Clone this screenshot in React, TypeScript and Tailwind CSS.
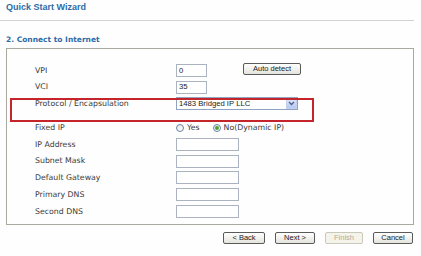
import React from 'react';

function TextBox({ value = '', w = 'w-[63px]' }: { value?: string; w?: string }) {
  return (
    <div
      className={`${w} h-[13px] border border-[#aab3bf] bg-white flex items-center pl-[2px] text-[7.7px] text-[#222] leading-none`}
      style={{ fontFamily: '"Liberation Sans", Arial, sans-serif' }}
    >
      {value}
    </div>
  );
}

function Radio({ checked }: { checked?: boolean }) {
  return (
    <span className="w-[8px] h-[8px] rounded-full border border-[#6a84a3] bg-gradient-to-br from-[#e6e6e0] to-white flex items-center justify-center">
      {checked && <span className="w-[4px] h-[4px] rounded-full bg-[#4aa23c]" />}
    </span>
  );
}

function XpButton({ label, w, disabled }: { label: string; w: string; disabled?: boolean }) {
  return (
    <button
      className={`${w} h-[12px] rounded-[2px] border flex items-center justify-center text-[7.5px] leading-none ${
        disabled
          ? 'border-[#cac8bb] bg-[#f5f4ea] text-[#b0ad9e]'
          : 'border-[#5a5a5a] bg-gradient-to-b from-white to-[#e4e3dc] text-[#222]'
      }`}
      style={{ fontFamily: '"Liberation Sans", Arial, sans-serif' }}
    >
      {label}
    </button>
  );
}

function Row({ label, h, children }: { label: string; h: string; children?: React.ReactNode }) {
  return (
    <div className={`flex items-center ${h}`}>
      <div className="w-[141px] text-[7.8px] text-[#3a3a3a] leading-none">{label}</div>
      {children}
    </div>
  );
}

export default function App() {
  return (
    <div
      className="w-[421px] h-[256px] bg-[#fefefe] overflow-hidden"
      style={{ fontFamily: '"DejaVu Sans", Verdana, sans-serif' }}
    >
      <div
        className="h-[20px] pl-[6px] pt-[3px] text-[9px] font-bold text-[#2d6ca8] leading-none"
        style={{ fontFamily: '"Liberation Sans", Arial, sans-serif' }}
      >
        Quick Start Wizard
      </div>
      <div className="w-[414px] h-px bg-[#d2d2d2]" />

      <div className="h-[27px] pl-[6px] pt-[15px] text-[7.5px] font-bold text-[#2d6ca8] leading-none">
        2. Connect to Internet
      </div>

      {/* settings panel */}
      <div className="relative ml-[6px] w-[408px] h-[177px] border border-[#aaa9a0] pl-[28px] pt-[13px]">
        <Row label="VPI" h="h-[17px]">
          <TextBox value="0" w="w-[31px]" />
          <div className="ml-[36px] mb-[3px]">
            <XpButton label="Auto detect" w="w-[58px]" />
          </div>
        </Row>
        <Row label="VCI" h="h-[16px]">
          <TextBox value="35" w="w-[31px]" />
        </Row>
        <Row label="Protocol / Encapsulation" h="h-[17px]">
          <div
            className="relative w-[122px] h-[13px] border border-[#8ea4c0] bg-white flex items-center pl-[2px] text-[7.7px] text-[#222] leading-none"
            style={{ fontFamily: '"Liberation Sans", Arial, sans-serif' }}
          >
            1483 Bridged IP LLC
            <div className="absolute right-0 top-0 w-[11px] h-[11px] bg-gradient-to-b from-[#dbe5fb] to-[#b7c9f2] border border-[#c3d1ef] flex items-center justify-center">
              <svg width="7" height="5" viewBox="0 0 7 5">
                <path d="M1 1 L3.5 3.5 L6 1" fill="none" stroke="#4d6185" strokeWidth="1.3" />
              </svg>
            </div>
          </div>
        </Row>
        <div className="h-[8px]" />
        <Row label="Fixed IP" h="h-[16px]">
          <div className="flex items-center gap-[3px] text-[7.8px] text-[#3a3a3a] leading-none">
            <Radio />
            <span>Yes</span>
            <span className="ml-[10px]">
              <Radio checked />
            </span>
            <span>No(Dynamic IP)</span>
          </div>
        </Row>
        <Row label="IP Address" h="h-[17px]">
          <TextBox />
        </Row>
        <Row label="Subnet Mask" h="h-[16px]">
          <TextBox />
        </Row>
        <Row label="Default Gateway" h="h-[17px]">
          <TextBox />
        </Row>
        <Row label="Primary DNS" h="h-[17px]">
          <TextBox />
        </Row>
        <Row label="Second DNS" h="h-[17px]">
          <TextBox />
        </Row>

        {/* highlight annotation */}
        <div className="absolute left-[3px] top-[49px] w-[304px] h-[24px] border-2 border-[#c4242a]" />
      </div>

      <div className="flex justify-end gap-[10px] pr-[8px] pt-[7px]">
        <XpButton label="< Back" w="w-[42px]" />
        <XpButton label="Next >" w="w-[40px]" />
        <XpButton label="Finish" w="w-[38px]" disabled />
        <XpButton label="Cancel" w="w-[40px]" />
      </div>
    </div>
  );
}
